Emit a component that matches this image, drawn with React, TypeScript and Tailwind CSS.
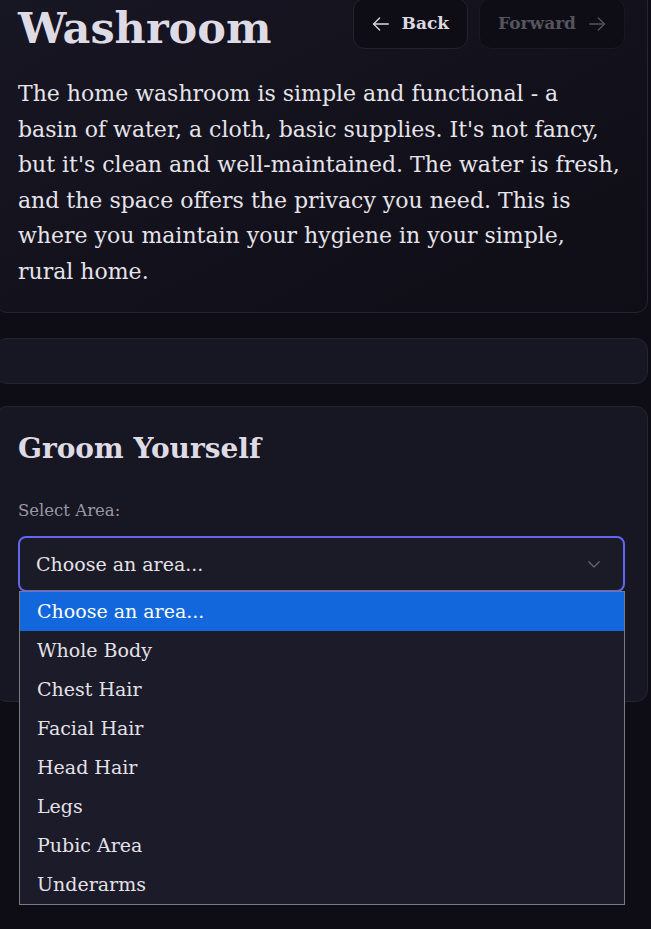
import React from "react"

const serif = "font-['DejaVu_Serif',serif]"

const options = ["Choose an area...", "Whole Body", "Chest Hair", "Facial Hair", "Head Hair", "Legs", "Pubic Area", "Underarms"]

function ArrowLeft() {
  return (
    <svg width="22" height="22" viewBox="0 0 24 24" fill="none" stroke="currentColor" strokeWidth="1.4" strokeLinecap="round" strokeLinejoin="round">
      <path d="M20 12H4" />
      <path d="M10.5 5.5L4 12l6.5 6.5" />
    </svg>
  )
}

function ArrowRight() {
  return (
    <svg width="22" height="22" viewBox="0 0 24 24" fill="none" stroke="currentColor" strokeWidth="1.4" strokeLinecap="round" strokeLinejoin="round">
      <path d="M4 12h16" />
      <path d="M13.5 5.5L20 12l-6.5 6.5" />
    </svg>
  )
}

export default function App() {
  return (
    <div className={`min-h-[929px] bg-[#0e0c14] overflow-hidden ${serif}`}>
      <div className="-mt-[25px] -ml-[5px] mr-[3px] flex flex-col">
        <div className="rounded-xl border border-[#25242f] bg-gradient-to-br from-[#171623] to-[#0f0e16] px-[22px] pt-[22px] pb-[23px]">
          <div className="flex items-start justify-between">
            <h1 className="text-[43px] leading-[60px] font-bold text-[#dedbe4]">Washroom</h1>
            <div className="flex gap-[11px]">
              <button className="flex items-center gap-[10px] rounded-xl border border-[#24232d] bg-[#0e0d15] pl-[16px] pr-[18px] h-[51px] text-[17px] font-bold text-[#dcd9e1]">
                <ArrowLeft />
                Back
              </button>
              <button className="flex items-center gap-[10px] rounded-xl border border-[#1a1922] bg-[#0e0d15] pl-[18px] pr-[16px] h-[51px] text-[17px] font-bold text-[#56545d]">
                Forward
                <ArrowRight />
              </button>
            </div>
          </div>
          <p className="mt-[18px] whitespace-nowrap text-[22px] leading-[35.5px] text-[#e6e3ea]">
            The home washroom is simple and functional - a<br />
            basin of water, a cloth, basic supplies. It's not fancy,<br />
            but it's clean and well-maintained. The water is fresh,<br />
            and the space offers the privacy you need. This is<br />
            where you maintain your hygiene in your simple,<br />
            rural home.
          </p>
        </div>

        <div className="mt-[25px] h-[46px] rounded-xl border border-[#25242f] bg-[#171623]" />

        <div className="relative mt-[22px] h-[296px] rounded-xl border border-[#25242f] bg-[#171623] p-[22px]">
          <h2 className="text-[28px] leading-[40px] font-bold text-[#dedbe4]">Groom Yourself</h2>
          <div className="mt-[30px] text-[16.5px] leading-6 text-[#9a97a3]">Select Area:</div>
          <div className="mt-[13px] flex h-[56px] items-center justify-between rounded-lg border-2 border-[#6366f1] bg-[#1b1a27] pl-4 pr-5 text-[19px] text-[#e4e1e8]">
            <span>Choose an area...</span>
            <svg width="18" height="18" viewBox="0 0 24 24" fill="none" stroke="#6b6975" strokeWidth="1.5" strokeLinecap="round" strokeLinejoin="round">
              <path d="M5 9l7 7 7-7" />
            </svg>
          </div>
          <div className="absolute left-[23px] top-[184px] w-[606px] border border-[#7b7a82] bg-[#1c1b29]">
            {options.map((o, i) => (
              <div
                key={o}
                className={`h-[39px] flex items-center pl-[17px] text-[19px] ${i === 0 ? "bg-[#1267dc] text-white" : "text-[#e4e1e8]"}`}
              >
                {o}
              </div>
            ))}
          </div>
        </div>
      </div>
    </div>
  )
}
